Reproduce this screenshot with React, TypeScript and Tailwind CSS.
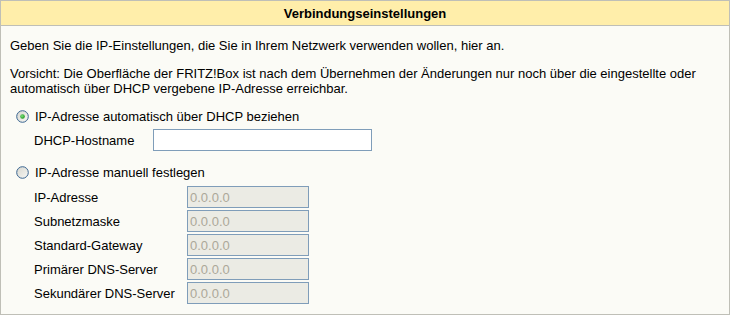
import React from "react";

const manualFields = [
  "IP-Adresse",
  "Subnetzmaske",
  "Standard-Gateway",
  "Primärer DNS-Server",
  "Sekundärer DNS-Server",
];

function Radio({ checked, id }: { checked?: boolean; id: string }) {
  return (
    <svg width="13" height="13" viewBox="0 0 13 13" className="shrink-0">
      <defs>
        <linearGradient id={id} x1="0" y1="0" x2="1" y2="1">
          <stop offset="0" stopColor="#d6d6cf" />
          <stop offset="1" stopColor="#f8f8f4" />
        </linearGradient>
        <radialGradient id={id + "-dot"} cx="0.4" cy="0.4" r="0.6">
          <stop offset="0" stopColor="#7fe07f" />
          <stop offset="1" stopColor="#1f9a1f" />
        </radialGradient>
      </defs>
      <circle cx="6.5" cy="6.5" r="5.8" fill={`url(#${id})`} stroke="#3a6591" strokeWidth="1" />
      {checked && <circle cx="6.5" cy="6.5" r="2.3" fill={`url(#${id}-dot)`} />}
    </svg>
  );
}

export default function App() {
  return (
    <div className="w-[730px] h-[315px] border border-[#bfbfb7] bg-[#fbfbf6] font-['Liberation_Sans',Arial,sans-serif] text-[13px] leading-[15px] text-black flex flex-col">
      {/* Kopfzeile */}
      <div className="h-[25px] shrink-0 bg-[#ffeeaa] border-b border-[#bfbfb7] flex items-center justify-center font-bold">
        Verbindungseinstellungen
      </div>

      <div className="pl-[9px] pt-[12px] whitespace-nowrap">
        <p>Geben Sie die IP-Einstellungen, die Sie in Ihrem Netzwerk verwenden wollen, hier an.</p>
        <p className="mt-[13px]">
          Vorsicht: Die Oberfläche der FRITZ!Box ist nach dem Übernehmen der Änderungen nur noch über die eingestellte oder
          <br />
          automatisch über DHCP vergebene IP-Adresse erreichbar.
        </p>

        {/* DHCP */}
        <div className="mt-[13px] pl-[6px] flex items-center gap-[6px] h-[15px]">
          <Radio id="r1" checked />
          <span>IP-Adresse automatisch über DHCP beziehen</span>
        </div>
        <div className="mt-[5px] pl-[24px] flex items-center">
          <span className="w-[119px]">DHCP-Hostname</span>
          <div className="w-[219px] h-[22px] bg-white border border-[#7f9db9]" />
        </div>

        {/* Manuell */}
        <div className="mt-[14px] pl-[6px] flex items-center gap-[6px] h-[15px]">
          <Radio id="r2" />
          <span>IP-Adresse manuell festlegen</span>
        </div>
        <div className="mt-[6px] pl-[24px] flex flex-col gap-[2px]">
          {manualFields.map((label) => (
            <div key={label} className="flex items-center">
              <span className="w-[153px]">{label}</span>
              <div className="w-[122px] h-[22px] bg-[#ebebe4] border border-[#7f9db9] pl-[2px] flex items-center text-[#aca899]">
                0.0.0.0
              </div>
            </div>
          ))}
        </div>
      </div>
    </div>
  );
}
